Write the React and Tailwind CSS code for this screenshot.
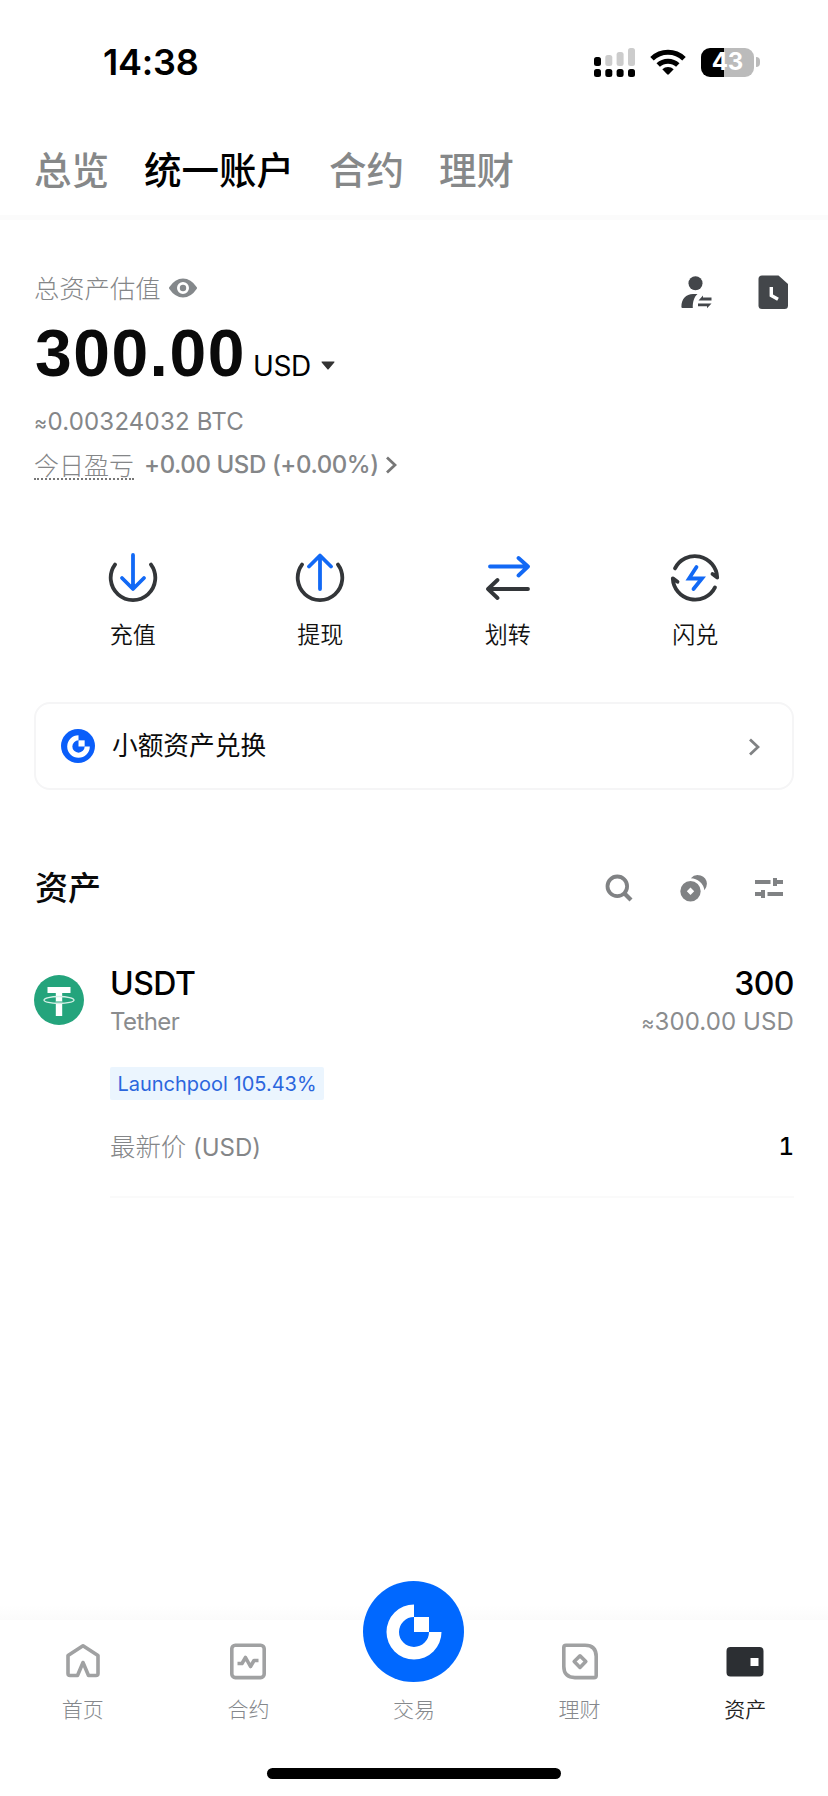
import clsx from 'clsx';

const GateMark = ({ className }) => (
  <svg viewBox="0 0 56 56" className={className} fill="#fff">
    <path d="M28 0.5A27.5 27.5 0 1 0 55.5 28H43A15 15 0 1 1 28 13Z" />
    <path d="M28 13H43V28H28Z" />
  </svg>
);

const StatusBar = () => (
  <header className="flex h-[124px] shrink-0 items-center pl-[103px] pr-[68px]">
    <span className="text-[36px] font-semibold leading-none tracking-[-0.2px]">14:38</span>
    <div className="ml-auto flex items-center">
      <svg width="41" height="29" viewBox="0 0 41 29">
        <rect x="0" y="9" width="7" height="9" rx="2.5" />
        <rect x="11.3" y="7" width="7" height="11" rx="2.5" fill="#ccc" />
        <rect x="22.6" y="4" width="7" height="14" rx="2.5" fill="#ccc" />
        <rect x="34" y="0" width="7" height="18" rx="2.5" fill="#ccc" />
        <rect x="0" y="21" width="7" height="8" rx="2.5" />
        <rect x="11.3" y="21" width="7" height="8" rx="2.5" />
        <rect x="22.6" y="21" width="7" height="8" rx="2.5" />
        <rect x="34" y="21" width="7" height="8" rx="2.5" />
      </svg>
      <svg width="36" height="27" viewBox="0 0 36 27" className="ml-[15px]">
        <g fill="none" stroke="#000" strokeWidth="5">
          <path d="M2 9.8A23 23 0 0 1 34 9.8" />
          <path d="M8.2 16A14.4 14.4 0 0 1 27.8 16" />
        </g>
        <path d="M12.3 20.2A8.4 8.4 0 0 1 23.7 20.2L18.9 25.3Q18 26.2 17.1 25.3Z" />
      </svg>
      <div className="ml-[15px] flex h-[29px] w-[53px] items-center justify-center rounded-[9px] bg-linear-to-r from-black from-43% to-[#bbb] to-43%">
        <span className="text-[24px] font-bold leading-none text-white">43</span>
      </div>
      <div className="ml-0.5 h-2.5 w-1 rounded-r-full bg-[#bbb]" />
    </div>
  </header>
);

const tabs = ['总览', '统一账户', '合约', '理财'];

const AccountTabs = () => (
  <nav className="flex h-[91px] shrink-0 items-center gap-[35px] px-[34px] pt-0.5 text-[37.5px] font-medium leading-none">
    {tabs.map((tab) => (
      <span key={tab} className={tab === '统一账户' ? 'text-black' : 'text-[#868889]'}>
        {tab}
      </span>
    ))}
  </nav>
);

const Balance = () => (
  <section className="flex justify-between">
    <div>
      <div className="mt-[50px] flex h-9 items-center">
        <span className="pt-0.5 text-[25.3px] font-light text-[#848688]">总资产估值</span>
        <svg width="30" height="20" viewBox="0 0 30 20" className="ml-[7px]">
          <path
            fillRule="evenodd"
            fill="#84888b"
            d="M1.2 9.2Q7 .5 15 .5T28.8 9.2Q29.3 10 28.8 10.8Q23 19.5 15 19.5T1.2 10.8Q.7 10 1.2 9.2ZM15 4a6 6 0 1 0 0 12a6 6 0 0 0 0-12Z"
          />
          <circle cx="15" cy="10" r="3.2" fill="#84888b" />
        </svg>
      </div>
      <div className="mt-[15px] flex h-16 items-baseline whitespace-nowrap">
        <span className="ml-px font-['Liberation_Sans',sans-serif] text-[66px] font-bold leading-[64px] tracking-[1.5px] text-[#0a0a0a]">
          300.00
        </span>
        <span className="ml-[7px] text-[28px] tracking-[-0.3px]">USD</span>
        <svg width="14" height="9" viewBox="0 0 14 9" className="mb-[15px] ml-2.5 self-end" fill="#333">
          <path d="M1 .5H13Q14 .5 13.3 1.4L7.8 8Q7 9 6.2 8L.7 1.4Q0 .5 1 .5Z" />
        </svg>
      </div>
      <div className="mt-[22px] h-[30px] text-[24px] leading-[30px] tracking-[0.2px] text-[#848688]">
        <span className="text-[20px] leading-none">≈</span>0.00324032 BTC
      </div>
      <div className="mt-[13px] flex h-[30px] items-center text-[#848688]">
        <span className="h-[30px] border-b-2 border-dotted border-[#777] text-[25px] font-light leading-[32px]">
          今日盈亏
        </span>
        <span className="ml-2.5 text-[24px] font-medium leading-[30px] tracking-[-0.4px]">+0.00 USD (+0.00%)</span>
        <svg width="12" height="18" viewBox="0 0 12 18" className="ml-1.5" fill="none" stroke="#777" strokeWidth="2.8">
          <path d="M2 1.5L10 9L2 16.5" />
        </svg>
      </div>
    </div>
    <div className="mr-[5px] mt-[54px] flex gap-[45px]">
      <svg width="32" height="36" viewBox="0 0 32 36" fill="#43464a">
        <circle cx="15.5" cy="9.2" r="7" />
        <path d="M2.5 34Q1.4 34 1.4 32.8C1.4 25 6 20 13 20H17.5C14 23 12.6 28 12.8 34Z" />
        <path d="M18.5 26.4L23 21.6V23.6H31.5V26.4Z" />
        <path d="M31.5 29.4L27 34.2V32.2H18V29.4Z" />
      </svg>
      <svg width="32" height="36" viewBox="0 0 32 36">
        <path fill="#43464a" d="M5 1.5H21.5L31 10V31.5Q31 35 27.5 35H5Q1.5 35 1.5 31.5V5Q1.5 1.5 5 1.5Z" />
        <path fill="none" stroke="#fff" strokeWidth="3.4" d="M14.3 13V21.5L21 25.3" />
      </svg>
    </div>
  </section>
);

const DepositIcon = () => (
  <>
    <path stroke="#333639" d="M7 11.6A22.3 22.3 0 1 0 43 11.6" />
    <path stroke="#1269f5" d="M25 2V35.5M14 25L25 36L36 25" />
  </>
);

const WithdrawIcon = () => (
  <>
    <path stroke="#333639" d="M7 11.6A22.3 22.3 0 1 0 43 11.6" />
    <path stroke="#1269f5" d="M25 36V3M14 13.5L25 2.5L36 13.5" />
  </>
);

const TransferIcon = () => (
  <>
    <path stroke="#1269f5" d="M7 13.5H44M35.5 5L45 13.5L35.5 22.5" />
    <path stroke="#333639" d="M45 36H7M14.5 27L5 36L14.5 45" />
  </>
);

const ConvertIcon = () => (
  <>
    <path stroke="#333639" d="M5 15.4A22.3 22.3 0 0 1 47.2 24.5L42.5 21" />
    <path stroke="#333639" d="M45 34.4A22.3 22.3 0 0 1 2.8 25.3L7.5 28.8" />
    <path stroke="#1269f5" d="M26.5 14L19 25.5H32L23.5 36" strokeLinejoin="miter" />
  </>
);

const actions = [
  { label: '充值', Icon: DepositIcon },
  { label: '提现', Icon: WithdrawIcon },
  { label: '划转', Icon: TransferIcon },
  { label: '闪兑', Icon: ConvertIcon },
];

const QuickActions = () => (
  <section className="mx-[5px] mt-[73px] grid grid-cols-4">
    {actions.map(({ label, Icon }) => (
      <div key={label} className="flex flex-col items-center">
        <svg
          width="50"
          height="50"
          viewBox="0 0 50 50"
          fill="none"
          strokeWidth="3.8"
          strokeLinecap="round"
          strokeLinejoin="round"
        >
          <Icon />
        </svg>
        <span className="mt-[17px] text-[23px] font-[350] leading-[30px] text-[#111]">{label}</span>
      </div>
    ))}
  </section>
);

const ConvertCard = () => (
  <section className="mt-[52px] flex h-[88px] items-center rounded-[16px] border-2 border-[#f5f5f6] pl-[25px] pr-[32px]">
    <div className="flex size-[34px] items-center justify-center rounded-full bg-[#0a5efa]">
      <GateMark className="size-[23px]" />
    </div>
    <span className="ml-[17px] text-[25.7px] leading-none text-[#0a0a0a]">小额资产兑换</span>
    <svg width="12" height="18" viewBox="0 0 12 18" className="ml-auto mt-0.5" fill="none" stroke="#808284" strokeWidth="2.8">
      <path d="M2 1.5L10 9L2 16.5" />
    </svg>
  </section>
);

const AssetsHeader = () => (
  <div className="mt-[78px] flex h-10 items-center justify-between">
    <h2 className="ml-px text-[33px] font-medium leading-none text-[#0a0a0a]">资产</h2>
    <div className="mr-[11px] flex gap-[47px]">
      <svg width="28" height="28" viewBox="0 0 28 28" fill="none" stroke="#808284">
        <circle cx="12.3" cy="12.3" r="9.8" strokeWidth="3.8" />
        <path d="M19.5 19.5L26 26" strokeWidth="4.2" />
      </svg>
      <svg width="28" height="28" viewBox="0 0 28 28" fill="#808284">
        <path
          fillRule="evenodd"
          d="M10.5 7A10.2 10.2 0 1 0 10.5 27.4A10.2 10.2 0 0 0 10.5 7ZM10.5 13.5L14.2 17.2L10.5 20.9L6.8 17.2Z"
        />
        <path d="M10.8 4.2A9.2 9.2 0 0 1 26.9 9.6Q27 13.2 24.4 16.2A14 14 0 0 0 10.8 4.2Z" />
      </svg>
      <svg width="28" height="28" viewBox="0 0 28 28" fill="#808284">
        <path d="M0 6H15.5V10H0ZM18 4H22V6H28V10H22V12H18Z" />
        <path d="M0 18H6V16H10V24H6V22H0ZM12.5 18H28V22H12.5Z" />
      </svg>
    </div>
  </div>
);

const AssetRow = () => (
  <div className="mt-[58px] flex">
    <svg width="50" height="50" viewBox="0 0 50 50" className="mt-[9px] shrink-0">
      <circle cx="25" cy="25" r="25" fill="#24a47c" />
      <path d="M13.5 12H36.5V18H28.2V41H21.8V18H13.5Z" fill="#fff" />
      <ellipse cx="25" cy="25" rx="15" ry="3.5" fill="none" stroke="#d7f0e7" strokeWidth="1.3" />
      <path d="M21.8 27H28.2" stroke="#24a47c" strokeWidth="1" />
    </svg>
    <div className="ml-[26px] flex-1 border-b-2 border-[#fafafa] pb-[34px]">
      <div className="flex justify-between text-[32px] font-medium leading-9 tracking-[-0.5px]">
        <span>USDT</span>
        <span>300</span>
      </div>
      <div className="mt-[5px] flex h-[30px] justify-between text-[24px] leading-[30px] text-[#8a8c8e]">
        <span className="tracking-[-0.6px]">Tether</span>
        <span>
          <span className="text-[20px] leading-none">≈</span>
          <span className="tracking-[0.1px]">300.00 USD</span>
        </span>
      </div>
      <div className="mt-[30px] flex h-[33px] w-[214px] items-center justify-center rounded-[2px] bg-[#ebf5fe] text-[20px] text-[#2b66dd]">
        Launchpool 105.43%
      </div>
      <div className="mt-8 flex h-[30px] items-center justify-between text-[24px]">
        <span className="text-[#848688]">
          <span className="text-[25.4px] font-light">最新价</span> (USD)
        </span>
        <span className="font-medium tabular-nums">1</span>
      </div>
    </div>
  </div>
);

const HomeIcon = () => (
  <path d="M19 2.8L34 12.5V30.5Q34 32.5 32 32.5H24.5L19 19.5L13.5 32.5H6Q4 32.5 4 30.5V12.5Z" />
);

const FuturesIcon = () => (
  <>
    <rect x="2.8" y="2.2" width="32.4" height="32.4" rx="3.5" />
    <path d="M8.5 20.5H13L16.5 14.5L21.5 23.5L25 17.5H29.5" />
  </>
);

const EarnIcon = () => (
  <>
    <path d="M5 2.2H24Q35.2 2.2 35.2 13.5V32.5Q35.2 34.6 33 34.6H14Q2.8 34.6 2.8 23.5V4.4Q2.8 2.2 5 2.2Z" />
    <path d="M19 12.8L24.8 18.6L19 24.4L13.2 18.6Z" />
  </>
);

const WalletIcon = () => (
  <path
    fill="#2c2f33"
    stroke="none"
    fillRule="evenodd"
    d="M4.5 4H33.5Q37.5 4 37.5 8V29.5Q37.5 33.5 33.5 33.5H4.5Q.5 33.5 .5 29.5V8Q.5 4 4.5 4ZM24.5 15V23H32.5V15Z"
  />
);

const navItems = [
  { label: '首页', Icon: HomeIcon },
  { label: '合约', Icon: FuturesIcon },
  { label: '交易' },
  { label: '理财', Icon: EarnIcon },
  { label: '资产', Icon: WalletIcon, active: true },
];

const BottomNav = () => (
  <footer className="mt-auto shrink-0">
    <div className="h-[15px] bg-linear-to-b from-white to-[#fbfbfb]" />
    <div className="grid grid-cols-5">
      {navItems.map(({ label, Icon, active }) => (
        <div key={label} className="flex flex-col items-center">
          {Icon ? (
            <div className="mt-5 flex h-[42px] items-center">
              <svg width="38" height="37" viewBox="0 0 38 37" fill="none" stroke="#a0a1a2" strokeWidth="3.6" strokeLinejoin="round">
                <Icon />
              </svg>
            </div>
          ) : (
            <div className="z-10 -mt-[39px] flex size-[101px] items-center justify-center rounded-full bg-[#0068ff]">
              <GateMark className="size-14" />
            </div>
          )}
          <span
            className={clsx(
              'mt-[13px] text-[21px] leading-[30px]',
              active ? 'font-[350] text-[#222]' : 'font-light text-[#85888c]'
            )}
          >
            {label}
          </span>
        </div>
      ))}
    </div>
    <div className="mx-auto mb-[17px] mt-[43px] h-[11px] w-[294px] rounded-full bg-black" />
  </footer>
);

export default function App() {
  return (
    <div className="flex h-[1796px] w-[828px] flex-col overflow-hidden bg-white font-['Inter','Noto_Sans_CJK_SC',sans-serif] text-black">
      <StatusBar />
      <AccountTabs />
      <div className="h-[5px] shrink-0 bg-[#fbfbfb]" />
      <main className="px-[34px]">
        <Balance />
        <QuickActions />
        <ConvertCard />
        <AssetsHeader />
        <AssetRow />
      </main>
      <BottomNav />
    </div>
  );
}
